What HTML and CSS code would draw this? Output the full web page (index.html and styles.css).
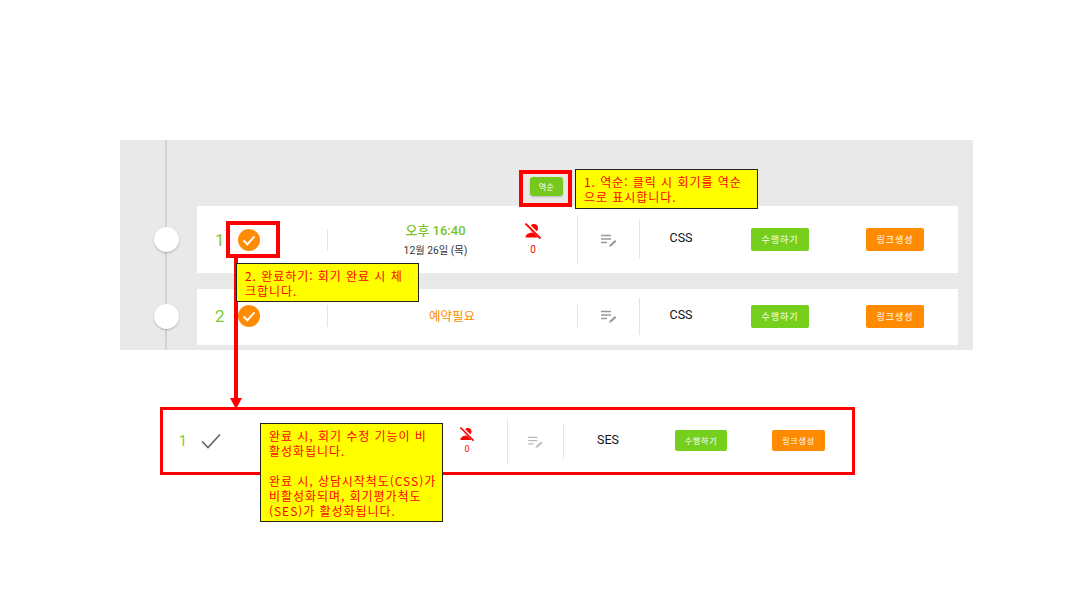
FILE: index.html
```html
<!DOCTYPE html>
<html lang="ko">
<head>
<meta charset="utf-8">
<title>회기 목록</title>
<link rel="stylesheet" href="styles.css">
</head>
<body>
<main class="slide">
  <section class="panel">
    <div class="toolbar"><button class="sort">역순</button></div>
    <div class="rows">
      <article class="row row-tall">
        <span class="dot"></span>
        <div class="idx"><span class="num">1</span>
          <svg class="check" viewBox="0 0 22 22"><circle cx="11" cy="11" r="11" fill="#ff8c00"/><path d="M5.500 11.500l3.800 3.800 7.200-8" fill="none" stroke="#fff" stroke-width="2"/></svg>
        </div>
        <i class="sep sep-a"></i>
        <div class="time"><span class="clock">오후 16:40</span><span class="date">12월 26일 (목)</span></div>
        <div class="person">
          <svg class="pic" viewBox="0 0 18 18"><circle cx="10" cy="5" r="4" fill="#f00"/><path d="M1.500 14.500c0-3.600 4-5 8-5s7 1.500 7.500 5z" fill="#f00"/><path d="M2 0l15 15" stroke="#fff" stroke-width="3.500"/><path d="M1.500 0.500l15 15" stroke="#f00" stroke-width="1.800"/></svg>
          <span class="zero">0</span>
        </div>
        <i class="sep sep-b"></i>
        <div class="note">
          <svg class="nic" viewBox="0 0 16 14"><path d="M0 1.500h10M0 5h10M0 8.500h6" stroke="#999" stroke-width="1.300"/><path d="M8 13l1-2.500 5-4.500 1.500 1.500-5 4.500z" fill="#999"/></svg>
        </div>
        <i class="sep sep-c"></i>
        <div class="code">CSS</div>
        <button class="btn go">수행하기</button>
        <button class="btn link">링크생성</button>
      </article>
      <article class="row row-short">
        <span class="dot"></span>
        <div class="idx"><span class="num">2</span>
          <svg class="check" viewBox="0 0 22 22"><circle cx="11" cy="11" r="11" fill="#ff8c00"/><path d="M5.500 11.500l3.800 3.800 7.200-8" fill="none" stroke="#fff" stroke-width="2"/></svg>
        </div>
        <i class="sep sep-d"></i>
        <div class="time"><span class="need">예약필요</span></div>
        <div class="person"></div>
        <i class="sep sep-d"></i>
        <div class="note">
          <svg class="nic" viewBox="0 0 16 14"><path d="M0 1.500h10M0 5h10M0 8.500h6" stroke="#999" stroke-width="1.300"/><path d="M8 13l1-2.500 5-4.500 1.500 1.500-5 4.500z" fill="#999"/></svg>
        </div>
        <i class="sep sep-e"></i>
        <div class="code">CSS</div>
        <button class="btn go">수행하기</button>
        <button class="btn link">링크생성</button>
      </article>
    </div>
  </section>

  <section class="done">
    <div class="done-idx"><span class="done-num">1</span>
      <svg class="done-check" viewBox="0 0 20 16"><path d="M1 8.500l6 6L19 1.500" fill="none" stroke="#666" stroke-width="1.700"/></svg>
    </div>
    <div class="done-person">
      <svg class="pic pic-sm" viewBox="0 0 18 18"><circle cx="10" cy="5" r="4" fill="#f00"/><path d="M1.500 14.500c0-3.600 4-5 8-5s7 1.500 7.500 5z" fill="#f00"/><path d="M2 0l15 15" stroke="#fff" stroke-width="3.500"/><path d="M1.500 0.500l15 15" stroke="#f00" stroke-width="1.800"/></svg>
      <span class="zero zero-sm">0</span>
    </div>
    <i class="sep sep-f"></i>
    <div class="done-note">
      <svg class="nic nic-dim" viewBox="0 0 16 14"><path d="M0 1.500h10M0 5h10M0 8.500h6" stroke="#bbb" stroke-width="1.300"/><path d="M8 13l1-2.500 5-4.500 1.500 1.500-5 4.500z" fill="#bbb"/></svg>
    </div>
    <i class="sep sep-g"></i>
    <div class="done-code">SES</div>
    <button class="btn-sm go-sm">수행하기</button>
    <button class="btn-sm link-sm">링크생성</button>
  </section>

  <div class="frame frame-sort"></div>
  <div class="frame frame-check"></div>
  <div class="arrow"></div>
  <p class="memo memo-1">1. 역순: 클릭 시 회기를 역순<br>으로 표시합니다.</p>
  <p class="memo memo-2">2. 완료하기: 회기 완료 시 체<br>크합니다.</p>
  <div class="memo memo-3">
    <p>완료 시, 회기 수정 기능이 비<br>활성화됩니다.</p>
    <p class="gap">완료 시, 상담시작척도(CSS)가<br>비활성화되며, 회기평가척도<br>(SES)가 활성화됩니다.</p>
  </div>
</main>
</body>
</html>
```

FILE: styles.css
```css
* { box-sizing: border-box; }
html, body { margin: 0; padding: 0; background: #fff; }
body { font-family: Roboto, "Noto Sans CJK KR", sans-serif; }
p { margin: 0; }
button { border: 0; padding: 0; font-family: inherit; color: #fff; }

.slide {
  position: relative;
  width: 1080px;
  height: 608px;
  overflow: hidden;
  padding: 140px 107px 0 120px;
}

.panel {
  position: relative;
  height: 210px;
  background: #e9e9e9;
  padding-left: 77px;
  padding-right: 15px;
}
.panel::before {
  content: "";
  position: absolute;
  left: 45px;
  top: 0;
  bottom: 0;
  width: 2px;
  background: #d3d3d3;
}

.toolbar { height: 66px; padding: 37px 0 0 333px; }
.sort {
  display: block;
  width: 33px;
  height: 19px;
  border-radius: 3px;
  background: #76c81e;
  font-size: 8px;
  letter-spacing: .5px;
  box-shadow: 0 1px 2px rgba(0, 0, 0, .2);
}

.rows { display: flex; flex-direction: column; gap: 16px; }
.row {
  position: relative;
  display: flex;
  align-items: center;
  background: #fff;
}
.row-tall { height: 67px; }
.row-short { height: 56px; padding-bottom: 2px; }

.dot {
  position: absolute;
  left: -43px;
  top: 50%;
  width: 25px;
  height: 25px;
  margin-top: -13px;
  border-radius: 50%;
  background: #fff;
  box-shadow: 0 1px 2px rgba(0, 0, 0, .25);
}

.idx { display: flex; align-items: center; width: 130px; padding-left: 18px; }
.num { width: 23px; font-size: 17px; font-weight: 400; color: #7fcb2e; }
.check { display: block; width: 22px; height: 22px; }

.sep { display: block; flex: none; width: 1px; background: #e4e4e4; }
.sep-a { height: 22px; }
.sep-b { height: 50px; }
.sep-c { height: 39px; }
.sep-d { height: 22px; }
.sep-e { height: 37px; }
.sep-f { height: 45px; }
.sep-g { height: 35px; }

.time {
  display: flex;
  flex-direction: column;
  align-items: center;
  width: 180px;
  padding-left: 34px;
}
.clock { font-size: 13px; font-weight: 500; line-height: 18px; color: #7ac52a; margin-left: 1px; }
.date { font-size: 10.300px; line-height: 15px; margin-top: 3px; margin-left: 1px; color: #333; }
.need { font-size: 12.500px; color: #ff8c00; padding-bottom: 2px; margin-left: 34px; }

.person {
  display: flex;
  flex-direction: column;
  align-items: center;
  width: 50px;
  margin-right: 19px;
}
.pic { display: block; width: 18px; height: 18px; }
.pic-sm { width: 16px; height: 16px; }
.zero { font-size: 10px; line-height: 12px; margin-top: 3px; color: #f00; }

.note { display: flex; justify-content: center; width: 61px; padding-top: 2px; }
.nic { display: block; width: 16px; height: 14px; }

.code { width: 82px; text-align: center; font-size: 12.500px; color: #111; padding-bottom: 4px; }

.btn {
  flex: none;
  width: 58px;
  height: 23px;
  border-radius: 2px;
  font-size: 9px;
  letter-spacing: 1px;
}
.go { margin-left: 29px; background: #76cf1c; }
.link { margin-left: 57px; background: #ff8c00; }

.done {
  display: flex;
  align-items: center;
  width: 695px;
  height: 68px;
  margin: 57px 0 0 40px;
  border: 3px solid #f00;
}
.done-idx { display: flex; align-items: center; width: 264px; padding-left: 16px; }
.done-num { width: 22px; font-size: 14px; font-weight: 400; color: #7fcb2e; }
.done-check { display: block; width: 20px; height: 16px; }
.done-person { display: flex; flex-direction: column; align-items: center; width: 80px; }
.zero-sm { font-size: 9px; line-height: 11px; margin-top: 1px; }
.done-note { display: flex; justify-content: center; width: 55px; padding-top: 3px; }
.nic-dim { width: 15px; height: 13px; }
.done-code { width: 88px; text-align: center; font-size: 12.500px; color: #111; padding-bottom: 3px; }
.btn-sm {
  flex: none;
  height: 21px;
  margin-bottom: 2px;
  border-radius: 2px;
  font-size: 8px;
  letter-spacing: .8px;
}
.go-sm { width: 52px; margin-left: 23px; background: #76cf1c; }
.link-sm { width: 53px; margin-left: 45px; background: #ff8c00; }

.frame { position: absolute; border: 4px solid #f00; }
.frame-sort { left: 519px; top: 170px; width: 53px; height: 37px; }
.frame-check { left: 226px; top: 221px; width: 54px; height: 37px; }

.arrow {
  position: absolute;
  left: 234px;
  top: 257px;
  width: 4px;
  height: 142px;
  background: #f00;
}
.arrow::after {
  content: "";
  position: absolute;
  left: -4px;
  bottom: -10px;
  border-left: 6px solid transparent;
  border-right: 6px solid transparent;
  border-top: 11px solid #f00;
}

.memo {
  position: absolute;
  width: 183px;
  padding: 4px 0 0 8px;
  background: #ff0;
  border: 1px solid #222;
  color: #f00;
  font-family: "Noto Sans CJK KR", sans-serif;
  font-size: 12px;
  line-height: 15px;
  letter-spacing: .95px;
  white-space: nowrap;
}
.memo-1 { left: 575px; top: 169px; height: 40px; }
.memo-2 { left: 236px; top: 263px; height: 39px; }
.memo-3 { left: 260px; top: 423px; height: 99px; }
.gap { margin-top: 15px; }
```
